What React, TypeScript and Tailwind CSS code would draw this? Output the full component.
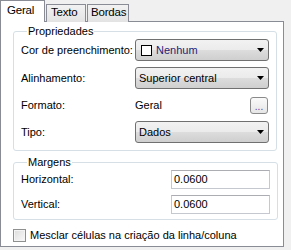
const Arrow = () => (
  <svg width="7" height="4" viewBox="0 0 7 4" className="ml-auto">
    <polygon points="0,0 7,0 3.5,4" fill="#000" />
  </svg>
);

const Combo = ({ children }: { children: React.ReactNode }) => (
  <div className="flex h-[22px] w-[134px] items-center rounded-[3px] border border-[#707070] bg-[linear-gradient(#f2f2f2,#ebebeb_50%,#dddddd_50%,#cfcfcf)] pl-[3px] pr-[4px]">
    {children}
    <Arrow />
  </div>
);

const Row = ({ label, children, h = 'h-[22px]' }: { label: string; children: React.ReactNode; h?: string }) => (
  <div className={`flex items-center ${h}`}>
    <span className="w-[114px]">{label}</span>
    {children}
  </div>
);

const TextBox = ({ value }: { value: string }) => (
  <div className="ml-[36px] flex h-[19px] w-[99px] items-center border border-[#c5c9cf] border-t-[#abadb3] bg-white pl-[2px]">
    {value}
  </div>
);

export default function App() {
  return (
    <div className="h-[250px] w-[291px] bg-[#f0f0f0] font-['Liberation_Sans',Arial,sans-serif] text-[11px] text-black">
      <div className="flex h-[22px] items-end text-[11.5px] leading-[13px] tracking-[-0.2px]">
        <div className="relative z-10 h-[22px] w-[45px] border border-b-0 border-[#898c95] bg-white pl-[6px] pt-[3px]">
          Geral
        </div>
        <div className="ml-px h-[18px] w-[40px] border border-b-0 border-[#898c95] bg-[linear-gradient(#f2f2f2,#e3e3e3)] pl-[4px] pt-[1px]">
          Texto
        </div>
        <div className="ml-px h-[18px] w-[42px] border border-b-0 border-[#898c95] bg-[linear-gradient(#f2f2f2,#e3e3e3)] pl-[3px] pt-[1px]">
          Bordas
        </div>
      </div>
      <div className="-mt-px h-[226px] w-[284px] border border-[#898c95] bg-white pl-[12px] pt-[3px]">
        <fieldset className="w-[264px] rounded-[3px] border border-[#d5dfe5] px-[7px] pb-[7px]">
          <legend className="ml-[6px] px-[1px] leading-[13px]">Propriedades</legend>
          <div className="mt-px flex flex-col gap-[6px]">
            <Row label="Cor de preenchimento:">
              <Combo>
                <span className="ml-[2px] mr-[4px] h-[11px] w-[11px] border border-black bg-white" />
                <span className="text-[#1e1e78]">Nenhum</span>
              </Combo>
            </Row>
            <Row label="Alinhamento:">
              <Combo>
                <span>Superior central</span>
              </Combo>
            </Row>
            <Row label="Formato:" h="h-[20px]">
              <span>Geral</span>
              <div className="ml-auto mr-[1px] flex h-[17px] w-[18px] items-end justify-center rounded-[3px] border border-[#8a8a8a] bg-[linear-gradient(#fafafa,#e6e6e6)] pb-[1px] text-[10px] leading-[10px] text-[#5b3ca8]">
                ...
              </div>
            </Row>
            <Row label="Tipo:">
              <Combo>
                <span>Dados</span>
              </Combo>
            </Row>
          </div>
        </fieldset>
        <fieldset className="mt-[5px] w-[264px] rounded-[3px] border border-[#d5dfe5] px-[7px] pb-[5px]">
          <legend className="ml-[6px] px-[1px] leading-[13px]">Margens</legend>
          <div className="mt-px flex flex-col gap-[6px]">
            <Row label="Horizontal:" h="h-[19px]">
              <TextBox value="0.0600" />
            </Row>
            <Row label="Vertical:" h="h-[19px]">
              <TextBox value="0.0600" />
            </Row>
          </div>
        </fieldset>
        <div className="mt-[7px] flex items-center gap-[4px]">
          <span className="h-[13px] w-[13px] border border-[#8e8f8f] bg-[linear-gradient(135deg,#dcdcdc,#fafafa)] shadow-[inset_0_0_0_1px_#f4f4f4]" />
          <span>Mesclar células na criação da linha/coluna</span>
        </div>
      </div>
    </div>
  );
}
